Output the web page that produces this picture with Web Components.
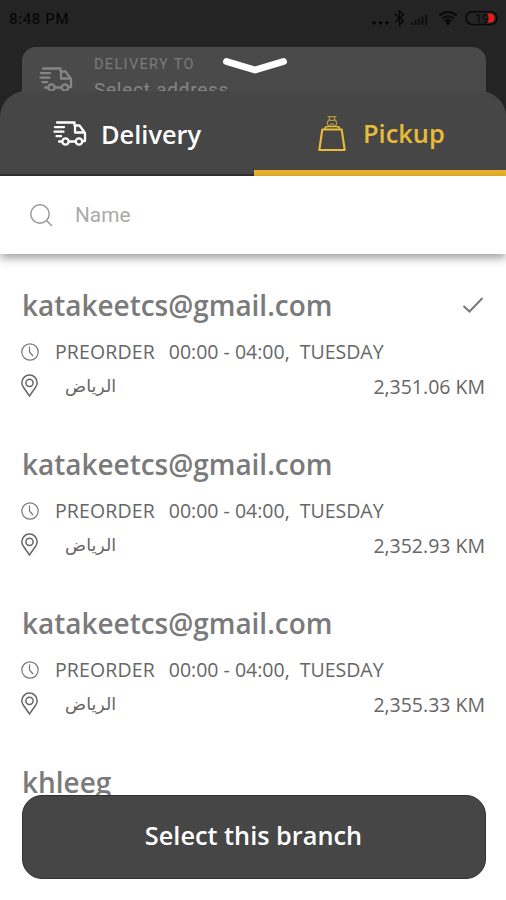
<!DOCTYPE html>
<html lang="en"><head><meta charset="utf-8"><title>Pickup branch</title>
<style>html,body{margin:0;padding:0}body{width:506px;height:900px;overflow:hidden;background:#fff}</style></head>
<body><branch-app></branch-app>
<script>
const define = (name, html) => customElements.define(name, class extends HTMLElement {
  constructor() {
    super();
    const t = document.createElement('template');
    t.innerHTML = html;
    this.attachShadow({mode: 'open'}).append(t.content.cloneNode(true));
  }
});

define('truck-icon', `<style>:host{display:block;width:34px;height:25px}svg{display:block;fill:none;stroke:currentColor;stroke-width:2.300;stroke-linejoin:round;stroke-linecap:round}</style>
<svg width="34" height="25" viewBox="0 0 34 25"><path d="M4 1.500H21.500V4.500H26.500L32 12V20H30M22 20.500H16.500M9 20.500H6M2 6.200H11M1.500 10.700H10.500M3.500 15.200H8M22 4.500V11.500H31.500"/><circle cx="12.500" cy="20.500" r="3.200"/><circle cx="26" cy="20.500" r="3.200"/></svg>`);

define('bag-icon', `<style>:host{display:block;width:28px;height:36px}svg{display:block;fill:none;stroke:currentColor;stroke-width:2.100;stroke-linejoin:round}</style>
<svg width="28" height="36" viewBox="0 0 28 36"><path d="M4.300 13.500H23.700L26.700 34H1.300Z"/><path d="M7 13V12Q7.500 10.500 10 10.500H18Q21 10.500 21.500 12V13" stroke-width="1.700"/><path d="M9.500 .7H18.500M11.500 1Q12 3 10.500 4.500Q8 7.500 11 10.500M16.500 1Q16 3 17.500 4.500Q20 7.500 17 10.500M11.500 4.300H16.500M11.500 9.500Q14 6 16.500 9.500" stroke-width="1.200" opacity=".7"/></svg>`);

define('status-bar', `<style>:host{display:flex;justify-content:space-between;height:47px;box-sizing:border-box;padding:8px 7px 0 9px;color:#080808;font:500 15px/22px Roboto,sans-serif}
.time{letter-spacing:.6px}svg{display:block}</style>
<span class="time">8:48 PM</span>
<svg width="128" height="22" viewBox="372 8 128 22"><g fill="#080808"><circle cx="375" cy="22.800" r="1.900"/><circle cx="381.500" cy="22.800" r="1.900"/><circle cx="388" cy="22.800" r="1.900"/><path d="M412 22h2.200v3H412zM415.500 20h2.200v5h-2.200zM419 18.500h2.200v6.500H419zM422.500 16.500h2.200v8.500h-2.200zM426 14.500h2.200v10.500H426z" opacity=".7"/><circle cx="449" cy="23" r="2"/></g>
<g fill="none" stroke="#080808" stroke-width="1.400"><path d="M396 14L404.500 21L400.500 25V11L404.500 14.500L396 22"/><path d="M440.500 15.500Q449 8.500 457.500 15.500M443.500 18.500Q449 14 454.500 18.500M446 21Q449 18.500 452 21" stroke-width="2"/></g>
<path d="M488.500 13.500H492Q495.500 14 495.500 18T492 22.500H488.500Z" fill="#e31f16"/><rect x="467" y="11.700" width="31" height="12.800" rx="6.400" fill="none" stroke="#080808" stroke-width="1.600"/><text x="476" y="22.500" font-family="Roboto,sans-serif" font-size="12.500" font-weight="400" fill="#080808">19</text></svg>`);

define('address-card', `<style>:host{display:flex;box-sizing:border-box;height:74px;margin:0 20px -30px 22px;padding:8px 17px 0;border-radius:14px 14px 0 0;background:#4a4a4a;color:#858585;font-family:Roboto,sans-serif;gap:21px}
truck-icon{margin-top:12px}.label{font-size:14.500px;line-height:19px;letter-spacing:1.350px;color:#7b7b7b}.value{font-size:19px;line-height:24px;margin-top:4px;letter-spacing:.75px}</style>
<truck-icon></truck-icon><div><div class="label">DELIVERY TO</div><div class="value">Select address</div></div>`);

define('service-tab', `<style>:host{display:flex;flex:none;width:254px;box-sizing:border-box;align-items:center;color:#fff;font:600 25.400px/34px "Open Sans",sans-serif;border-bottom:2px solid #303030;padding:2px 0 0 53px}
:host([selected]){width:252px;color:#e8bc38;border-bottom:6px solid #e9b22c;padding:5px 0 0 64px}
:host([selected]) ::slotted(bag-icon){margin-top:1px}
::slotted(.label){margin-left:14px}:host([selected]) ::slotted(.label){margin-left:17px}</style>
<slot></slot>`);

define('search-field', `<style>:host{display:flex;align-items:center;height:78px;flex:none;box-sizing:border-box;padding:0 29px;background:#fff;color:#aaa;font:400 20.800px/28px Roboto,sans-serif;box-shadow:0 4px 9px rgba(0,0,0,.38);position:relative}
svg{margin-right:22px}</style><svg width="24" height="24" viewBox="0 0 24 24" fill="none" stroke="#999" stroke-width="1.500"><circle cx="11" cy="11" r="9.200"/><path d="M17.500 17.500L23 23"/></svg><slot></slot>`);

define('branch-card', `<style>:host{display:block;height:159px;box-sizing:border-box;padding:0 21px 0 22px;color:#666;font:400 19.500px/26px "Open Sans",sans-serif}
div{display:flex;align-items:center}svg{flex:none;fill:none;stroke:currentColor}
.title{height:38px;justify-content:space-between;color:#7a7a7a;font-weight:600;font-size:27.950px}
.check{display:none;margin-right:1px}:host([selected]) .check{display:block}
.hours{height:34px;margin-top:11px}.hours svg{margin:0 16px 1px -1px;color:#777}.place{height:34px}.place svg{margin-left:-1px}.city{font:17.500px/26px "DejaVu Sans",sans-serif;margin-left:27px}.km{margin-left:auto;padding-top:2px}
.pre{letter-spacing:.12px}.day{margin-left:10px}.time{margin-left:14px}:host([brief]) :is(.hours,.place){display:none}:host([brief]){height:38px}</style>
<div class="title"><slot name="name"></slot><svg class="check" width="22" height="18" viewBox="0 0 22 18" stroke-width="2"><path d="M1.500 10L7.500 15.500L20.500 2"/></svg></div>
<div class="hours"><svg width="18" height="18" viewBox="0 0 18 18" stroke-width="1.200"><circle cx="9" cy="9" r="8.200"/><path d="M8.500 3.500V9L12 13"/></svg><span class="pre">PREORDER</span><span class="time">00:00 - 04:00,</span><span class="day">TUESDAY</span></div>
<div class="place"><svg width="17" height="24" viewBox="0 0 17 24" stroke-width="1.500"><path d="M8.500 22L2.600 13.500Q.8 11 .8 8.800A7.700 7.700 0 0 1 16.200 8.800Q16.200 11 14.400 13.500Z"/><circle cx="8.500" cy="8.800" r="3.600"/></svg><span class="city" dir="rtl" lang="ar">الرياض</span><span class="km"><slot name="distance"></slot></span></div>`);

define('primary-button', `<style>:host{display:flex;align-items:center;justify-content:center;height:84px;box-sizing:border-box;border:1px solid #303030;border-radius:20px;background:#464646;color:#fff;font:600 25.300px/34px "Open Sans",sans-serif;padding:0 1px 4px 0}</style><slot></slot>`);

define('branch-app', `<style>:host{display:flex;flex-direction:column;position:relative;width:506px;height:900px;background:#242424;overflow:hidden}
.sheet{position:relative;display:flex;flex-direction:column;flex:1;min-height:0;border-radius:26px 26px 0 0;background:#464646;overflow:hidden}
.tabs{display:flex;height:85px;flex:none}.list{flex:1;min-height:0;overflow:hidden;padding-top:32px;background:#fff}
.footer{padding:0 20px 21px 22px;background:#fff}
.handle{position:absolute;left:222px;top:56px}</style>
<status-bar></status-bar><address-card></address-card>
<div class="sheet"><div class="tabs"><service-tab><truck-icon></truck-icon><span class="label">Delivery</span></service-tab><service-tab selected><bag-icon></bag-icon><span class="label">Pickup</span></service-tab></div>
<search-field>Name</search-field>
<div class="list"><branch-card selected><span slot="name">katakeetcs@gmail.com</span><span slot="distance">2,351.06 KM</span></branch-card>
<branch-card><span slot="name">katakeetcs@gmail.com</span><span slot="distance">2,352.93 KM</span></branch-card>
<branch-card><span slot="name">katakeetcs@gmail.com</span><span slot="distance">2,355.33 KM</span></branch-card>
<branch-card brief><span slot="name">khleeg</span></branch-card></div>
<div class="footer"><primary-button>Select this branch</primary-button></div></div>
<svg class="handle" width="66" height="20" viewBox="0 0 66 20" fill="none" stroke="#fff" stroke-width="7" stroke-linecap="round" stroke-linejoin="round"><path d="M4.500 5.500L33 14L61.500 5.500"/></svg>`);
</script></body></html>
